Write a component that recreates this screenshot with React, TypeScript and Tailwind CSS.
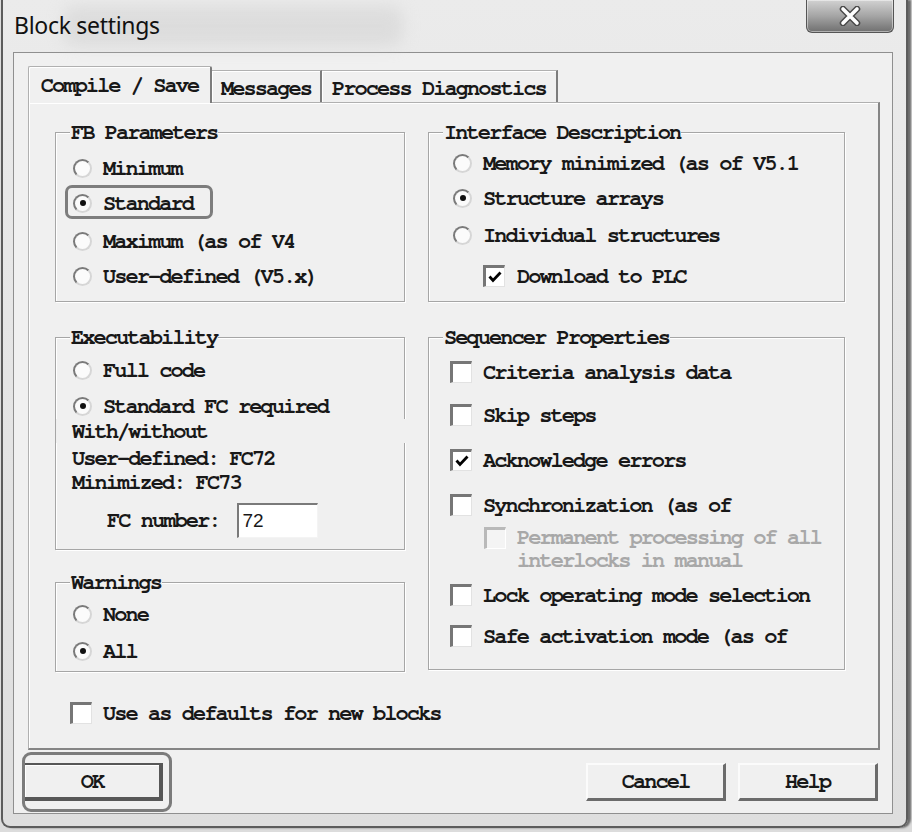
import React from "react";

function Radio({ checked = false }: { checked?: boolean }) {
  return (
    <span className="flex h-[19px] w-[19px] shrink-0 items-center justify-center rounded-full border-[2.5px] border-t-[#7a7a7a] border-l-[#7a7a7a] border-r-[#d6d6d6] border-b-[#d6d6d6] bg-[#fbfbfb]">
      {checked ? <span className="h-[6px] w-[6px] rounded-full bg-[#111111]" /> : null}
    </span>
  );
}

function CheckBox({ checked = false, disabled = false }: { checked?: boolean; disabled?: boolean }) {
  if (disabled) {
    return (
      <span className="block h-[22px] w-[22px] shrink-0 border-t-[3px] border-l-[3px] border-r border-b border-t-[#b9b9b9] border-l-[#b9b9b9] border-r-[#ffffff] border-b-[#ffffff] bg-[#f4f4f4]" />
    );
  }
  return (
    <span className="flex h-[22px] w-[22px] shrink-0 items-center justify-center border-t-[3px] border-l-[3px] border-r border-b border-t-[#767676] border-l-[#767676] border-r-[#e2e2e2] border-b-[#e2e2e2] bg-white">
      {checked ? (
        <svg width="14" height="12" viewBox="0 0 14 12">
          <path d="M1.5 5.5 L5 9.5 L12.5 1.5" fill="none" stroke="#000" strokeWidth="2.8" />
        </svg>
      ) : null}
    </span>
  );
}

function RadioRow({ label, checked = false, className = "" }: { label: string; checked?: boolean; className?: string }) {
  return (
    <div className={"flex h-[24px] items-center " + className}>
      <Radio checked={checked} />
      <span className="ml-[11px] whitespace-nowrap">{label}</span>
    </div>
  );
}

function CheckRow({ label, checked = false, className = "" }: { label: string; checked?: boolean; className?: string }) {
  return (
    <div className={"flex h-[24px] items-center " + className}>
      <CheckBox checked={checked} />
      <span className="ml-[11px] whitespace-nowrap">{label}</span>
    </div>
  );
}

function Group({ label, className = "", children }: { label: string; className?: string; children?: React.ReactNode }) {
  return (
    <div
      className={
        "relative flex flex-col border border-[#a6a6a6] shadow-[1px_1px_0_0_#ffffff,inset_1px_1px_0_0_#ffffff] " + className
      }
    >
      <span className="absolute -top-[12px] left-[14px] bg-[#f0f0f0] px-[1px] leading-[22px] whitespace-nowrap">
        {label}
      </span>
      {children}
    </div>
  );
}

export default function App() {
  return (
    <div className="relative h-[832px] w-[912px] overflow-hidden bg-[#dcdcdc] font-['FreeMono','Courier_New',monospace] text-[22px] font-bold tracking-[-1.95px] text-[#181818]">
      <div className="ml-[1px] flex h-[828px] w-[907px] flex-col rounded-b-[9px] border-x-2 border-b-2 border-[#5c5c5c] bg-linear-to-b from-[#ebebeb] to-[#dedede] shadow-[3px_0_2px_0_#6a6a6a]">
        {/* title bar */}
        <div className="relative flex h-[52px] shrink-0 items-start justify-between pl-[11px] pr-[12px]">
          <span className="pointer-events-none absolute left-[60px] top-[6px] h-[40px] w-[340px] rounded-[12px] bg-[#cfcfcf] opacity-50 blur-[8px]" />
          <span className="relative mt-[9px] font-['Noto_Sans',sans-serif] text-[23px] font-normal leading-[32px] tracking-[-0.3px] text-[#111111]">
            Block settings
          </span>
          <div className="relative flex h-[33px] w-[88px] items-center justify-center rounded-b-[6px] border border-t-0 border-[#555555] bg-linear-to-b from-[#d2d2d2] via-[#a5a5a5] to-[#707070] shadow-[inset_0_0_0_1px_rgba(255,255,255,0.45)]">
            <svg width="26" height="20" viewBox="0 0 26 20">
              <path d="M6 3 L20 17 M20 3 L6 17" stroke="#4a4a4a" strokeWidth="6.5" strokeLinecap="round" fill="none" />
              <path d="M6 3 L20 17 M20 3 L6 17" stroke="#ffffff" strokeWidth="3.6" strokeLinecap="round" fill="none" />
            </svg>
          </div>
        </div>

        {/* client area */}
        <div className="ml-[10px] flex h-[762px] w-[880px] shrink-0 flex-col border border-[#8f8f8f] bg-[#f0f0f0]">
          <div className="flex flex-col px-[14px] pt-[13px]">
            {/* tabs */}
            <div className="flex h-[36px] items-end">
              <div className="relative z-10 -mb-[1px] flex h-[37px] w-[184px] items-center justify-center rounded-t-[2px] border-t border-l border-r-2 border-t-[#b0b0b0] border-l-[#b0b0b0] border-r-[#7c7c7c] bg-[#f0f0f0] shadow-[inset_1px_1px_0_0_#ffffff]">
                Compile / Save
              </div>
              <div className="flex h-[32px] w-[110px] items-center justify-center border-t border-r-2 border-t-[#b0b0b0] border-r-[#7c7c7c] bg-[#f0f0f0] pt-[3px] shadow-[inset_1px_1px_0_0_#ffffff]">
                Messages
              </div>
              <div className="flex h-[32px] w-[236px] items-center justify-center border-t border-r-2 border-t-[#b0b0b0] border-r-[#7c7c7c] bg-[#f0f0f0] pt-[3px] shadow-[inset_1px_1px_0_0_#ffffff]">
                Process Diagnostics
              </div>
            </div>

            {/* panel */}
            <div className="flex h-[648px] w-[852px] flex-col border-t border-l border-r-2 border-b-2 border-t-[#b0b0b0] border-l-[#b0b0b0] border-r-[#858585] border-b-[#858585] pl-[26px] pt-[29px] shadow-[inset_1px_1px_0_0_#ffffff]">
              <div className="flex items-start gap-[23px]">
                {/* left column */}
                <div className="flex w-[350px] flex-col">
                  <Group label="FB Parameters" className="h-[170px]">
                    <RadioRow className="mt-[23px] pl-[17px]" label="Minimum" />
                    <div className="relative mt-[11px] flex h-[24px] items-center pl-[17px]">
                      <Radio checked />
                      <span className="ml-[11px] whitespace-nowrap">Standard</span>
                      <span className="absolute -top-[6px] left-[9px] h-[34px] w-[148px] rounded-[7px] border-[3px] border-[#7d7d7d]" />
                    </div>
                    <RadioRow className="mt-[14px] pl-[17px]" label="Maximum (as of V4" />
                    <RadioRow className="mt-[11px] pl-[17px]" label="User-defined (V5.x)" />
                  </Group>

                  <Group label="Executability" className="mt-[35px] h-[213px]">
                    <RadioRow className="mt-[20px] pl-[17px]" label="Full code" />
                    <RadioRow className="mt-[12px] pl-[17px]" label="Standard FC required" checked />
                    <div className="relative z-10 -mr-[3px] mt-[1px] h-[24px] bg-[#f0f0f0] pl-[16px] leading-[24px] whitespace-nowrap">
                      With/without
                    </div>
                    <div className="mt-[3px] h-[24px] pl-[16px] leading-[24px] whitespace-nowrap">User-defined: FC72</div>
                    <div className="h-[24px] pl-[16px] leading-[24px] whitespace-nowrap">Minimized: FC73</div>
                    <div className="mt-[9px] flex h-[35px] items-center pl-[51px]">
                      <span className="whitespace-nowrap">FC number:</span>
                      <div className="ml-[17px] flex h-[35px] w-[81px] items-center border-t-2 border-l-2 border-r border-b border-t-[#7a7a7a] border-l-[#7a7a7a] border-r-[#f4f4f4] border-b-[#f4f4f4] bg-white pl-[4px] font-['Liberation_Sans',sans-serif] text-[19px] font-normal tracking-normal">
                        72
                      </div>
                    </div>
                  </Group>

                  <Group label="Warnings" className="mt-[32px] h-[90px]">
                    <RadioRow className="mt-[19px] pl-[17px]" label="None" />
                    <RadioRow className="mt-[13px] pl-[17px]" label="All" checked />
                  </Group>
                </div>

                {/* right column */}
                <div className="flex w-[417px] flex-col">
                  <Group label="Interface Description" className="h-[170px]">
                    <RadioRow className="mt-[18px] pl-[24px]" label="Memory minimized (as of V5.1" />
                    <RadioRow className="mt-[11px] pl-[24px]" label="Structure arrays" checked />
                    <RadioRow className="mt-[13px] pl-[24px]" label="Individual structures" />
                    <div className="mt-[17px] flex h-[24px] items-center pl-[54px]">
                      <CheckBox checked />
                      <span className="ml-[12px] whitespace-nowrap">Download to PLC</span>
                    </div>
                  </Group>

                  <Group label="Sequencer Properties" className="mt-[35px] h-[333px]">
                    <CheckRow className="mt-[22px] pl-[21px]" label="Criteria analysis data" />
                    <CheckRow className="mt-[19px] pl-[21px]" label="Skip steps" />
                    <CheckRow className="mt-[21px] pl-[21px]" label="Acknowledge errors" checked />
                    <CheckRow className="mt-[21px] pl-[21px]" label="Synchronization (as of" />
                    <div className="mt-[9px] flex h-[46px] items-start overflow-hidden pl-[55px]">
                      <span className="mt-[1px] block">
                        <CheckBox disabled />
                      </span>
                      <span className="ml-[11px] leading-[23px] text-[#a8a8a8]">
                        <span className="block whitespace-nowrap">Permanent processing of all</span>
                        <span className="block whitespace-nowrap">interlocks in manual</span>
                      </span>
                    </div>
                    <CheckRow className="mt-[11px] pl-[21px]" label="Lock operating mode selection" />
                    <CheckRow className="mt-[17px] pl-[21px]" label="Safe activation mode (as of" />
                  </Group>
                </div>
              </div>

              <div className="mt-[29px] flex h-[24px] items-center pl-[15px]">
                <CheckBox />
                <span className="ml-[11px] whitespace-nowrap">Use as defaults for new blocks</span>
              </div>
            </div>
          </div>

          {/* buttons */}
          <div className="mt-[13px] flex items-start justify-between pl-[9px] pr-[14px]">
            <div className="relative">
              <div className="flex h-[38px] w-[140px] items-center justify-center border-t-2 border-l-2 border-r-[4px] border-b-[4px] border-[#575757] bg-[#f0f0f0] shadow-[inset_1px_1px_0_0_#ffffff]">
                OK
              </div>
              <span className="absolute -left-[1px] -top-[11px] h-[60px] w-[150px] rounded-[9px] border-[3px] border-[#7b7b7b]" />
            </div>
            <div className="flex gap-[12px]">
              <div className="flex h-[38px] w-[140px] items-center justify-center border-t-2 border-l-2 border-r-[3px] border-b-[3px] border-t-[#fbfbfb] border-l-[#fbfbfb] border-r-[#6b6b6b] border-b-[#6b6b6b] bg-[#f0f0f0]">
                Cancel
              </div>
              <div className="flex h-[38px] w-[140px] items-center justify-center border-t-2 border-l-2 border-r-[3px] border-b-[3px] border-t-[#fbfbfb] border-l-[#fbfbfb] border-r-[#6b6b6b] border-b-[#6b6b6b] bg-[#f0f0f0]">
                Help
              </div>
            </div>
          </div>
        </div>
      </div>
    </div>
  );
}
